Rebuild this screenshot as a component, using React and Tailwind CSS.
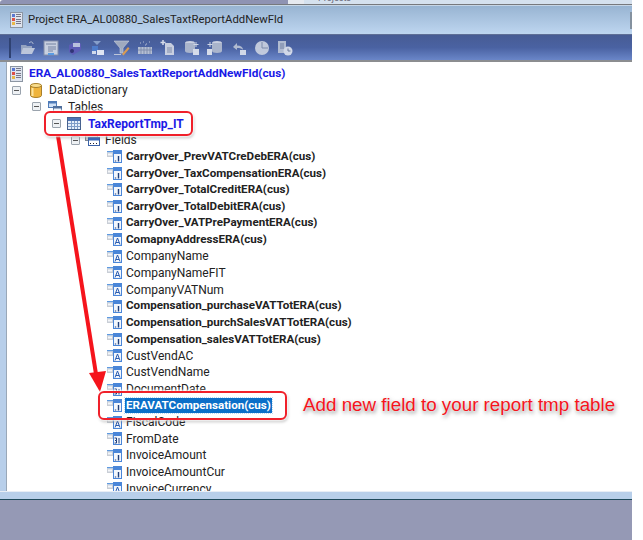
import React from "react";

const fields = [
  ["CarryOver_PrevVATCreDebERA(cus)", "n", 1],
  ["CarryOver_TaxCompensationERA(cus)", "n", 1],
  ["CarryOver_TotalCreditERA(cus)", "n", 1],
  ["CarryOver_TotalDebitERA(cus)", "n", 1],
  ["CarryOver_VATPrePaymentERA(cus)", "n", 1],
  ["ComapnyAddressERA(cus)", "a", 1],
  ["CompanyName", "a", 0],
  ["CompanyNameFIT", "a", 0],
  ["CompanyVATNum", "a", 0],
  ["Compensation_purchaseVATTotERA(cus)", "n", 1],
  ["Compensation_purchSalesVATTotERA(cus)", "n", 1],
  ["Compensation_salesVATTotERA(cus)", "n", 1],
  ["CustVendAC", "a", 0],
  ["CustVendName", "a", 0],
  ["DocumentDate", "d", 0],
  ["ERAVATCompensation(cus)", "n", 2],
  ["FiscalCode", "a", 0],
  ["FromDate", "d", 0],
  ["InvoiceAmount", "n", 0],
  ["InvoiceAmountCur", "n", 0],
  ["InvoiceCurrency", "a", 0],
];

function Minus() {
  return (
    <span className="w-[9px] h-[9px] shrink-0 border border-[#9aa3ad] rounded-[1px] bg-[#eef1f4] flex items-center justify-center">
      <span className="w-[5px] h-px bg-[#555]" />
    </span>
  );
}

function ProjectIcon() {
  return (
    <svg width="13" height="16" viewBox="0 0 13 16" className="shrink-0">
      <rect x="0.500" y="0.500" width="12" height="15" fill="#dfe4ee" stroke="#8c96a3" />
      <rect x="2" y="2" width="3" height="3" fill="#5a78d0" />
      <rect x="2" y="6" width="3" height="3" fill="#dc5048" />
      <rect x="2" y="10" width="3" height="3" fill="#e8b84a" />
      <rect x="6" y="2" width="5" height="1" fill="#778" />
      <rect x="6" y="4" width="5" height="1" fill="#778" />
      <rect x="6" y="7" width="5" height="1" fill="#778" />
      <rect x="6" y="9" width="5" height="1" fill="#778" />
      <rect x="6" y="11" width="5" height="1" fill="#778" />
    </svg>
  );
}

function DbIcon() {
  return (
    <svg width="12" height="15" viewBox="0 0 12 15" className="shrink-0">
      <path d="M.5 2.500v10c0 1 2.500 2 5.500 2s5.500-1 5.500-2v-10z" fill="#efb43c" stroke="#a9802c" />
      <ellipse cx="6" cy="2.500" rx="5.500" ry="2" fill="#f8dc8c" stroke="#a9802c" />
      <rect x="1.500" y="5" width="2" height="8" fill="#fbe3a0" />
    </svg>
  );
}

function TablesIcon() {
  return (
    <svg width="14" height="12" viewBox="0 0 14 12" className="shrink-0">
      <rect x="0.500" y="0.500" width="8" height="6" fill="#cfe0f5" stroke="#4f7bb8" />
      <rect x="0.500" y="0.500" width="8" height="2" fill="#4f7bb8" />
      <rect x="5.500" y="5.500" width="8" height="6" fill="#e8eff8" stroke="#4f6f9c" />
      <rect x="5.500" y="5.500" width="8" height="2" fill="#4f6f9c" />
    </svg>
  );
}

function TableIcon() {
  return (
    <svg width="14" height="13" viewBox="0 0 14 13" className="shrink-0">
      <rect x="0.500" y="0.500" width="13" height="12" fill="#e6eefa" stroke="#47628f" />
      <rect x="1" y="1" width="12" height="3" fill="#4f74b4" />
      <path d="M1 6.500h12M1 9.500h12M4.500 4v8M7.500 4v8M10.500 4v8" stroke="#7f9cc8" strokeWidth="1" />
    </svg>
  );
}

function FieldsIcon() {
  return (
    <svg width="15" height="12" viewBox="0 0 15 12" className="shrink-0">
      <rect x="0.500" y="0.500" width="12" height="6" fill="#c8cdd4" stroke="#7d8793" />
      <rect x="3.500" y="3.500" width="11" height="8" fill="#fff" stroke="#3a62a8" />
      <rect x="4" y="4" width="10" height="2.500" fill="#3a6cc0" />
      <path d="M5 9.500h1M8 9.500h1M11 9.500h1" stroke="#223" />
    </svg>
  );
}

function FieldIcon({ kind }) {
  return (
    <svg width="15" height="13" viewBox="0 0 15 13" className="shrink-0">
      <rect x="0" y="1" width="8" height="1.500" fill="#5f9ae0" />
      <rect x="0" y="2.500" width="7" height="4.500" fill="#c9ced6" />
      <rect x="1" y="3.500" width="4" height="2" fill="#f4f6f9" />
      <rect x="6" y="0" width="9" height="13" fill="#4a86d8" />
      <rect x="7" y="4" width="7" height="8" fill="#f2f6fc" />
      {kind === "a" && <path d="M8 11.500l2.500-6.500 2.500 6.500M9 9.500h3" stroke="#2a5cb0" strokeWidth="1" fill="none" />}
      {kind === "n" && <path d="M8.500 10.500v1M11.500 6v5.500" stroke="#1f3f7c" strokeWidth="1.400" fill="none" />}
      {kind === "d" && <path d="M7.500 6h2v2.500h-1.500M9.500 8.500v2.500H7.500M12 6v5.500" stroke="#1f3f7c" strokeWidth="1" fill="none" />}
    </svg>
  );
}

const barIcons = [
  <g key="0"><path d="M1 5h5l1 1h5v2H4L2 14H1z" fill="#9eabc4" /><path d="M3 8h12l-3 6H1z" fill="#c8d0e0" /><path d="M9 3c2-2 4-1 4 1" stroke="#c8d0e0" fill="none" /></g>,
  <g key="1"><rect x="1" y="1" width="14" height="14" fill="#d5dbe6" stroke="#8792aa" /><path d="M3 4h10M5 7h8M5 9h8M5 11h5" stroke="#7a87a3" /><rect x="5" y="13" width="6" height="2" fill="#5aa0e8" /></g>,
  <g key="2"><path d="M2 5l8-4 4 3v6l-8 5-4-3z" fill="#5f5cb8" /><rect x="6" y="3" width="7" height="4" fill="#c6cbe4" /><circle cx="5" cy="11" r="2" fill="#2e2f70" /></g>,
  <g key="3"><path d="M3 1h8L7 5z" fill="#8ea6d0" /><rect x="2" y="6" width="6" height="5" fill="#4f7fd0" /><rect x="7" y="10" width="7" height="5" fill="#eef2fa" /><rect x="2" y="11" width="4" height="3" fill="#dfe6f2" /></g>,
  <g key="4"><path d="M0 1h15L9 8v5H6V8z" fill="#a9b2c2" stroke="#d4d8e2" strokeWidth=".6" /><path d="M8 14l6-7 1.500 1.500-6 7z" fill="#e8a048" /><rect x="0" y="14" width="7" height="1" fill="#c8cfdd" /></g>,
  <g key="5"><rect x="1" y="7" width="14" height="7" fill="#bfc7d8" /><path d="M1 10h14M4 7v7M7 7v7M10 7v7M13 7v7" stroke="#8592ad" /><path d="M3 3h1M6 2h1M9 4h1M12 2h1M8 5h1" stroke="#c2cadb" /></g>,
  <g key="6"><path d="M5 3h6l3 3v9H5z" fill="#d5dae6" /><path d="M7 8h5M7 10h5M7 12h5" stroke="#8390ac" /><path d="M3 0v5M0.500 2.500h5" stroke="#e6eaf2" strokeWidth="1.500" /></g>,
  <g key="7"><ellipse cx="6" cy="3" rx="5" ry="2" fill="#d8dde8" /><path d="M1 3v8c0 1 2 2 5 2s5-1 5-2V3z" fill="#b4bdd0" /><rect x="9" y="9" width="6" height="6" fill="#e4e8f0" /><path d="M12 2v5M9.500 4.500h5" stroke="#dfe4ee" /></g>,
  <g key="8"><ellipse cx="10" cy="3" rx="5" ry="2" fill="#d8dde8" /><path d="M5 3v8c0 1 2 2 5 2s5-1 5-2V3z" fill="#b4bdd0" /><rect x="0" y="9" width="5" height="6" fill="#e4e8f0" /><path d="M3 2v5M.5 4.500h5" stroke="#dfe4ee" /></g>,
  <g key="9"><path d="M2 7l4-4v2.500c4 0 6 1.500 6 4.500-1-1.500-3-2-6-2V10z" fill="#bcc5d6" /><rect x="9" y="10" width="6" height="5" fill="#dfe4ee" /></g>,
  <g key="10"><circle cx="8" cy="8" r="7" fill="#cdd4e2" /><path d="M8 8V2M8 8h6" stroke="#8390ac" /></g>,
  <g key="11"><rect x="1" y="1" width="8" height="12" fill="#bcc5d6" /><path d="M3 4h4M3 6h4M3 8h4" stroke="#7583a2" /><circle cx="11" cy="11" r="4.500" fill="#dfe4ee" /><path d="M11 8.500V11h2.500" stroke="#6f7d9d" fill="none" /></g>,
];

function Row({ className, children }) {
  return <div className={`flex items-center h-[16.6px] whitespace-nowrap ${className}`}>{children}</div>;
}

export default function App() {
  return (
    <div className="relative w-[643px] h-[540px] bg-white overflow-hidden text-[12px] text-[#222] font-['Roboto','Noto_Sans',sans-serif]">
      <div className="w-[632px] h-[540px] flex flex-col">
        <div className="h-[4px] flex shrink-0 overflow-hidden">
          <div className="w-[288px] bg-[#8f93b3] rounded-tl-[3px]" />
          <div className="w-[16px] bg-[#e6e9ef]" />
          <div className="flex-1 bg-[#d5e1ee] pl-[14px] text-[9px] leading-[10px] text-[#667]">
            <div className="-mt-[7px]">Projects</div>
          </div>
        </div>
        <div className="h-[1px] shrink-0 bg-[#77797d]" />
        <div className="h-[29px] shrink-0 flex items-center justify-between pl-[10px] bg-gradient-to-b from-[#98b4d2] to-[#bed6f0] border-t border-[#c6d6e6]">
          <div className="flex items-center gap-[5px]">
            <ProjectIcon />
            <span className="text-[11.3px]">Project ERA_AL00880_SalesTaxtReportAddNewFld</span>
          </div>
          <div className="w-[2px] h-[17px] bg-[#84919f]" />
        </div>
        <div className="h-[26px] shrink-0 flex items-center pl-[9px] bg-gradient-to-b from-[#475c94] via-[#4a62a2] to-[#6a86c8] border-t border-[#5f6f96]">
          <div className="w-[2px] h-[20px] bg-[#2f4272] mr-[9px]" />
          <div className="flex items-center gap-[7.4px] opacity-90">
            {barIcons.map((g, i) => (
              <svg key={i} width="16" height="16" viewBox="0 0 16 16" className="shrink-0">{g}</svg>
            ))}
          </div>
        </div>
        <div className="h-[2px] shrink-0 bg-[#8b8d90]" />
        <div className="h-[429px] shrink-0 flex">
          <div className="w-[7px] shrink-0 bg-[#b8cfea] border-r border-[#9aa8b8]" />
          <div className="flex-1 bg-white overflow-hidden pt-[3.5px]">
            <Row className="pl-[3px] gap-[6px] font-bold text-[11.8px] text-[#1a1ae6]">
              <ProjectIcon />
              <span>ERA_AL00880_SalesTaxtReportAddNewFld(cus)</span>
            </Row>
            <Row className="pl-[5px]">
              <Minus />
              <span className="ml-[9px]"><DbIcon /></span>
              <span className="ml-[7px]">DataDictionary</span>
            </Row>
            <Row className="pl-[25px]">
              <Minus />
              <span className="ml-[7px]"><TablesIcon /></span>
              <span className="ml-[6px]">Tables</span>
            </Row>
            <Row className="pl-[45px] font-bold text-[#1a1ae6]">
              <Minus />
              <span className="ml-[6px]"><TableIcon /></span>
              <span className="ml-[7px]">TaxReportTmp_IT</span>
            </Row>
            <Row className="pl-[64px]">
              <Minus />
              <span className="ml-[5px]"><FieldsIcon /></span>
              <span className="ml-[5px]">Fields</span>
            </Row>
            {fields.map(([name, kind, style]) => (
              <Row key={name} className="pl-[100px]">
                <FieldIcon kind={kind} />
                {style === 2 ? (
                  <span className="ml-[3px] px-[1px] h-[15px] flex items-center bg-[#0b6fc8] text-white font-bold text-[11.6px] outline-1 outline-dotted outline-[#bcd8f0]">{name}</span>
                ) : (
                  <span className={style === 1 ? "ml-[4px] font-bold text-[11.6px]" : "ml-[4px]"}>{name}</span>
                )}
              </Row>
            ))}
          </div>
        </div>
        <div className="h-[8px] shrink-0 bg-[#b8cfea] border-t border-[#e8eef6]" />
        <div className="h-[1px] shrink-0 bg-[#1f4a5c]" />
        <div className="flex-1 bg-[#9599b5]" />
      </div>

      <svg width="643" height="540" className="absolute left-0 top-0 pointer-events-none">
        <path d="M58 136L96 374" stroke="#f5141c" strokeWidth="4" fill="none" />
        <path d="M89 373L106 371L100 392z" fill="#f5141c" />
      </svg>
      <div className="absolute left-[44px] top-[111px] w-[149px] h-[25px] rounded-[6px] border-2 border-[#f0202a] shadow-[0_0_2px_1px_rgba(255,255,255,0.9),1px_2px_3px_rgba(0,0,0,0.25)]" />
      <div className="absolute left-[98px] top-[391px] w-[189px] h-[29px] rounded-[6px] border-2 border-[#f0202a] shadow-[0_0_2px_1px_rgba(255,255,255,0.9),1px_2px_3px_rgba(0,0,0,0.25)]" />
      <div className="absolute left-[303px] top-[395px] text-[18.8px] leading-[20px] whitespace-nowrap text-[#f5141c] font-['Liberation_Sans',sans-serif] [text-shadow:0_0_2px_#fff,1px_2px_4px_#777]">
        Add new field to your report tmp table
      </div>
    </div>
  );
}
